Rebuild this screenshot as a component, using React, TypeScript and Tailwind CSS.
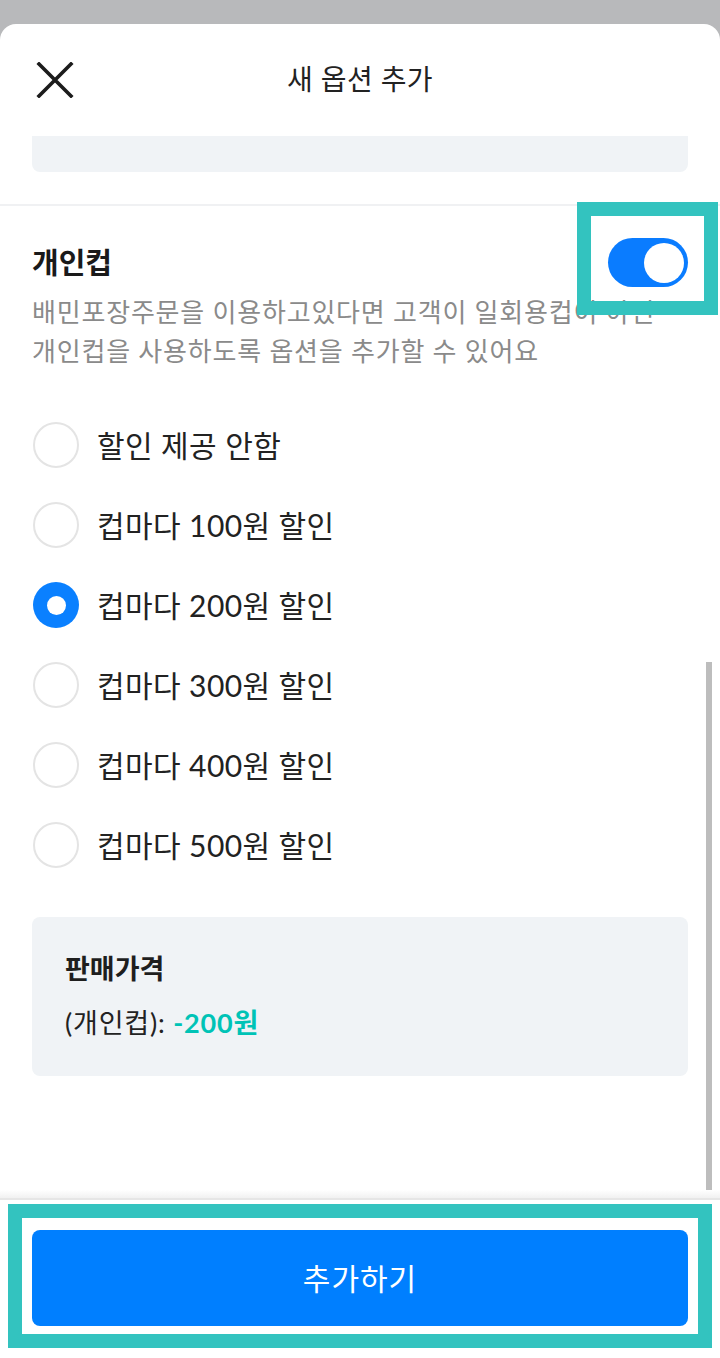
import React from "react";

const FONT = { fontFamily: 'Lato, "Noto Sans CJK KR", "Noto Sans", sans-serif' };

const options = [
  "할인 제공 안함",
  "컵마다 100원 할인",
  "컵마다 200원 할인",
  "컵마다 300원 할인",
  "컵마다 400원 할인",
  "컵마다 500원 할인",
];

function Radio({ checked }: { checked: boolean }) {
  if (checked) {
    return (
      <div className="w-[46px] h-[46px] rounded-full bg-[#0a80ff] flex items-center justify-center shrink-0">
        <div className="w-[19px] h-[19px] rounded-full bg-white" />
      </div>
    );
  }
  return <div className="w-[46px] h-[46px] rounded-full border-2 border-[#e4e4e4] bg-white shrink-0" />;
}

export default function App() {
  return (
    <div className="relative w-[720px] h-[1358px] bg-[#b8b9bb] pt-[24px] overflow-hidden" style={FONT}>
      <div className="bg-white rounded-t-[16px] h-[1334px] flex flex-col">
        {/* Header */}
        <div className="h-[112px] flex items-center px-[36px] shrink-0">
          <svg width="38" height="36" viewBox="0 0 38 36" className="shrink-0">
            <path d="M3 2 L35 34 M35 2 L3 34" stroke="#1c1c1c" strokeWidth="3.6" strokeLinecap="square" fill="none" />
          </svg>
          <div className="flex-1 text-center text-[28px] tracking-[0.4px] text-[#222] leading-none -mt-[2px]">새 옵션 추가</div>
          <div className="w-[38px] shrink-0" />
        </div>

        {/* Scroll area */}
        <div className="h-[1062px] overflow-hidden shrink-0">
          <div className="mx-[32px] h-[36px] bg-[#f0f3f6] rounded-b-[8px]" />
          <div className="mt-[32px] h-[2px] bg-[#f0f1f3]" />

          <div className="px-[32px]">
            <div className="pt-[32px] h-[81px] flex items-end justify-between">
              <div className="h-[49px] flex items-center text-[29px] font-bold text-[#1a1a1a] leading-none">개인컵</div>
              <div className="w-[80px] h-[49px] rounded-full bg-[#0a7cff] flex items-center justify-end pr-[4px]">
                <div className="w-[40px] h-[40px] rounded-full bg-white" />
              </div>
            </div>
            <div className="mt-[6px] text-[26px] leading-[39px] text-[#8a8a8a] tracking-[0.8px] whitespace-nowrap">
              배민포장주문을 이용하고있다면 고객이 일회용컵이 아닌
              <br />
              개인컵을 사용하도록 옵션을 추가할 수 있어요
            </div>

            <div className="mt-[34px] flex flex-col">
              {options.map((o, i) => (
                <div key={o} className="h-[80px] flex items-center gap-[18px] pl-[1px]">
                  <Radio checked={i === 2} />
                  <span className="text-[30px] tracking-[0.4px] text-[#222] leading-none">{o}</span>
                </div>
              ))}
            </div>

            <div className="mt-[32px] h-[159px] bg-[#f0f3f6] rounded-[8px] px-[33px] pt-[35px]">
              <div className="text-[27px] font-semibold text-[#1e1e1e] leading-[34px]">판매가격</div>
              <div className="mt-[20px] text-[27px] tracking-[0.8px] text-[#222] leading-[34px]">
                (개인컵): <span className="font-bold text-[#00c3b6]">-200원</span>
              </div>
            </div>
          </div>
        </div>

        {/* Footer */}
        <div className="relative flex-1 border-t-2 border-[#e6e6e6] bg-white">
          <div className="absolute left-0 right-0 -top-[10px] h-[8px] bg-gradient-to-b from-transparent to-[#f1f1f1]" />
          <div className="mx-[32px] mt-[30px] h-[96px] rounded-[8px] bg-[#007fff] flex items-center justify-center">
            <span className="text-[30px] tracking-[1px] text-white leading-none">추가하기</span>
          </div>
        </div>
      </div>

      {/* scrollbar */}
      <div className="absolute left-[706px] top-[662px] w-[6px] h-[528px] bg-[#bdbdbd]" />

      {/* annotation highlights */}
      <div className="absolute left-[577px] top-[202px] w-[141px] h-[113px] border-[14px] border-[#33c3bf]" />
      <div className="absolute left-[8px] top-[1204px] w-[704px] h-[144px] border-[14px] border-[#33c3bf]" />
    </div>
  );
}
